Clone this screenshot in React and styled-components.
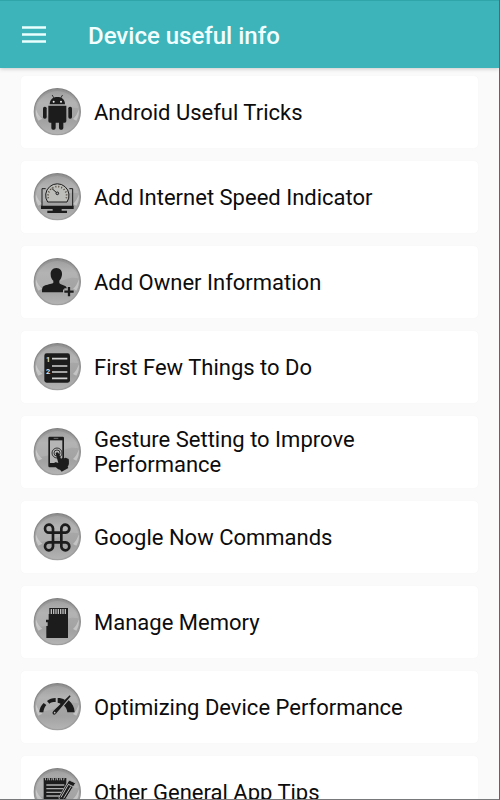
import React from "react";
import styled, { createGlobalStyle } from "styled-components";

const GlobalStyle = createGlobalStyle`
    * {
        box-sizing: border-box;
    }

    body {
        margin: 0;
        background-color: #fafafa;
        font-family: Roboto, "Liberation Sans", sans-serif;
        color: #0c0c0c;
    }
`;

const Screen = styled.div`
    height: 100vh;
    display: flex;
    flex-direction: column;
    overflow: hidden;
    border-right: 1px solid #606464;
    border-bottom: 1px solid #77797a;
`;

const AppBar = styled.header`
    display: flex;
    flex: none;
    align-items: center;
    gap: 40px;
    height: 68px;
    padding: 2px 20px 0;
    background-color: #3cb4ba;
    border-top: 1px solid #2fa5aa;
    box-shadow: 0 1px 4px rgba(0, 0, 0, 0.2);
    z-index: 1;
`;

const MenuButton = styled.button`
    display: flex;
    padding: 0;
    border: none;
    background: none;
    cursor: pointer;
`;

const Title = styled.h1`
    margin: 0;
    font-size: 24px;
    font-weight: 500;
    line-height: 28px;
    color: #f2ffff;
`;

const List = styled.ul`
    flex: 1;
    min-height: 0;
    display: flex;
    flex-direction: column;
    gap: 13px;
    margin: 0;
    padding: 8px 21px;
    list-style: none;
    overflow-y: auto;
    scrollbar-width: none;
`;

const Item = styled.li`
    flex: none;
`;

const Card = styled.a`
    display: flex;
    align-items: center;
    gap: 13px;
    min-height: 72px;
    padding: 0 12px;
    border-radius: 4px;
    background-color: #ffffff;
    box-shadow: 0 0 1px rgba(0, 0, 0, 0.06);
    color: inherit;
    text-decoration: none;
`;

const Label = styled.span`
    font-size: 22px;
    line-height: 25px;
`;

const IconSvg = styled.svg`
    flex: none;
    width: 48px;
    height: 48px;
`;

const INK = "#1c1c1c";

const Badge = ({ children }) => (
    <IconSvg viewBox="24 20 144 144" aria-hidden="true">
        <circle cx="97" cy="91" r="69" fill="url(#badgeFill)" stroke="url(#badgeRim)" strokeWidth="4" />
        <path d="M34 106a64 64 0 0 1 126-25c-12-3-24-3-42 4-30 12-52 22-84 21z" fill="#fff" opacity="0.12" />
        <path d="M33 84q-3 18 7 34l12-6q-14-10-19-28zM161 84q3 18-7 34l-10-5q12-10 17-29z" fill="#dadada" opacity="0.6" />
        {children}
    </IconSvg>
);

const BadgeDefs = () => (
    <svg width="0" height="0" style={{ position: "absolute" }} aria-hidden="true">
        <defs>
            <linearGradient id="badgeFill" x1="0" y1="0" x2="0" y2="1">
                <stop offset="0" stopColor="#8e8e8e" />
                <stop offset="0.3" stopColor="#a9a9a9" />
                <stop offset="0.7" stopColor="#a2a2a2" />
                <stop offset="1" stopColor="#b4b4b4" />
            </linearGradient>
            <linearGradient id="badgeRim" x1="0" y1="0" x2="0" y2="1">
                <stop offset="0" stopColor="#828282" />
                <stop offset="1" stopColor="#a0a0a0" />
            </linearGradient>
        </defs>
    </svg>
);

const AndroidIcon = () => (
    <Badge>
        <g fill={INK}>
            <path d="M74 69c0-14 9-22 23-22s23 8 23 22z" />
            <path d="M82 42l6 10M112 42l-6 10" stroke={INK} strokeWidth="2.5" strokeLinecap="round" />
            <path d="M70 73h54v46q0 5-5 5H75q-5 0-5-5z" />
            <rect x="54" y="76" width="11" height="36" rx="5" />
            <rect x="130" y="76" width="11" height="36" rx="5" />
            <path d="M79 122h13v18q0 5-5 5h-3q-5 0-5-5zM102 122h13v18q0 5-5 5h-3q-5 0-5-5z" />
        </g>
        <circle cx="86" cy="61" r="3" fill="#eee" />
        <circle cx="108" cy="61" r="3" fill="#eee" />
    </Badge>
);

const SpeedIcon = () => (
    <Badge>
        <path d="M62 67H51v56h92V67h-10" fill="none" stroke={INK} strokeWidth="3" />
        <path d="M48 118h98v10h-36v5h16v7H67v-7h16v-5H48z" fill={INK} />
        <path d="M68 107a35 35 0 1 1 58 0z" fill="#bdbdb9" stroke={INK} strokeWidth="3" />
        <path
            d="M70 96a28 28 0 1 1 54 0"
            fill="none"
            stroke="#4b4033"
            strokeWidth="5"
            strokeDasharray="3 6"
        />
        <path d="M80 66l17 15" stroke={INK} strokeWidth="3" />
        <circle cx="97" cy="81" r="4" fill="#aaa" stroke={INK} strokeWidth="3" />
    </Badge>
);

const OwnerIcon = () => (
    <Badge>
        <path
            d="M94 50c12 0 18 9 17 20-1 9-5 14-8 18v7c4 6 21 6 23 16h-8v12H51c0-12 1-18 10-21 9-4 21-4 24-8v-6c-4-4-8-10-8-18-1-11 5-20 17-20z"
            fill={INK}
        />
        <path d="M132 103v36M114 121h36" stroke="#aaaaaa" strokeWidth="13" />
        <path d="M132 107v28M118 121h28" stroke={INK} strokeWidth="7" />
    </Badge>
);

const ChecklistIcon = () => (
    <Badge>
        <rect x="58" y="51" width="77" height="88" rx="7" fill={INK} />
        <path d="M81 67h46M81 89h46M81 107h46M81 126h46" stroke="#d0d0d0" strokeWidth="5" />
        <text x="63" y="76" fontFamily="Roboto, sans-serif" fontSize="22" fontWeight="700" fill="#e0e0e0">1</text>
        <text x="63" y="113" fontFamily="Roboto, sans-serif" fontSize="22" fontWeight="700" fill="#e0e0e0">2</text>
    </Badge>
);

const GestureIcon = () => (
    <Badge>
        <rect x="70" y="46" width="47" height="92" rx="4" fill={INK} />
        <rect x="75" y="57" width="37" height="68" fill="#b5b5b5" />
        <path d="M86 51h14" stroke="#999" strokeWidth="2" />
        <circle cx="96" cy="95" r="15" fill="none" stroke={INK} strokeWidth="2.5" />
        <circle cx="96" cy="95" r="9" fill="none" stroke={INK} strokeWidth="2.5" />
        <path
            d="M92 96q4-6 9 0l7 16 5-3 5 2 4-2 9 4q3 16-3 23l2 4-20 11-5-6c-7 0-13-8-18-17 0-6 6-7 13-3z"
            fill={INK}
        />
    </Badge>
);

const CommandIcon = () => (
    <Badge>
        <path
            d="M84 79v42a12 12 0 1 1-12-13h50a12 12 0 1 1-13 13V66a12 12 0 1 1 13 13H72a12 12 0 1 1 12-13z"
            fill="none"
            stroke={INK}
            strokeWidth="8"
            strokeLinejoin="round"
        />
    </Badge>
);

const MemoryIcon = () => (
    <Badge>
        <path d="M73 50h56v90H64v-36h4V93h-5v-8h8V68h2z" fill={INK} />
        <path
            d="M79 53v15M86 53v15M93 53v15M100 53v15M107 53v15M114 53v15M121 53v15"
            stroke="#bdbdbd"
            strokeWidth="4"
        />
    </Badge>
);

const GaugeIcon = () => (
    <Badge>
        <path d="M43 108c1-13 5-20 13-28l8 6c-5 6-8 13-9 22z" fill={INK} />
        <path d="M66 74c7-6 15-9 26-9v12c-8 0-14 1-19 5z" fill={INK} />
        <path d="M98 65c9 0 15 2 22 6l-11 13c-4-3-7-4-11-5z" fill={INK} />
        <path d="M131 72c11 9 17 20 18 36h-22c-1-9-4-15-10-20z" fill={INK} />
        <path d="M134 57l3 3-43 51q-4 6-10 3-4-5 1-10z" fill={INK} />
        <circle cx="89" cy="109" r="2.5" fill="#bbb" />
    </Badge>
);

const NotesIcon = () => (
    <Badge>
        <path d="M56 50h68v88H56z" fill={INK} />
        <path d="M64 71h54M64 82h52M64 93h46M64 104h42M64 115h40M64 126h40" stroke="#aaaaaa" strokeWidth="4" />
        <path
            d="M62 57q-4-11 3-11t3 11M74 57q-4-11 3-11t3 11M86 57q-4-11 3-11t3 11M98 57q-4-11 3-11t3 11M110 57q-4-11 3-11t3 11"
            fill="none"
            stroke="#a5a5a5"
            strokeWidth="3"
        />
        <path d="M132 56l20 9-31 50-15 12-4-19z" fill={INK} stroke="#aaa" strokeWidth="3" />
        <path d="M129 71l-21 37M138 75l-22 36M128 68l17 8" stroke="#bbb" strokeWidth="3" />
    </Badge>
);

const tips = [
    { label: "Android Useful Tricks", Icon: AndroidIcon },
    { label: "Add Internet Speed Indicator", Icon: SpeedIcon },
    { label: "Add Owner Information", Icon: OwnerIcon },
    { label: "First Few Things to Do", Icon: ChecklistIcon },
    { label: "Gesture Setting to Improve Performance", Icon: GestureIcon },
    { label: "Google Now Commands", Icon: CommandIcon },
    { label: "Manage Memory", Icon: MemoryIcon },
    { label: "Optimizing Device Performance", Icon: GaugeIcon },
    { label: "Other General App Tips", Icon: NotesIcon },
];

const App = () => (
    <>
        <GlobalStyle />
        <BadgeDefs />
        <Screen>
            <AppBar>
                <MenuButton type="button" aria-label="Menu">
                    <svg width="28" height="28" viewBox="0 0 28 28" aria-hidden="true">
                        <path d="M2 5.5h24M2 12.5h24M2 19.5h24" stroke="#eaffff" strokeWidth="2.4" />
                    </svg>
                </MenuButton>
                <Title>Device useful info</Title>
            </AppBar>
            <List>
                {tips.map(({ label, Icon }) => (
                    <Item key={label}>
                        <Card href="#">
                            <Icon />
                            <Label>{label}</Label>
                        </Card>
                    </Item>
                ))}
            </List>
        </Screen>
    </>
);

export default App;
